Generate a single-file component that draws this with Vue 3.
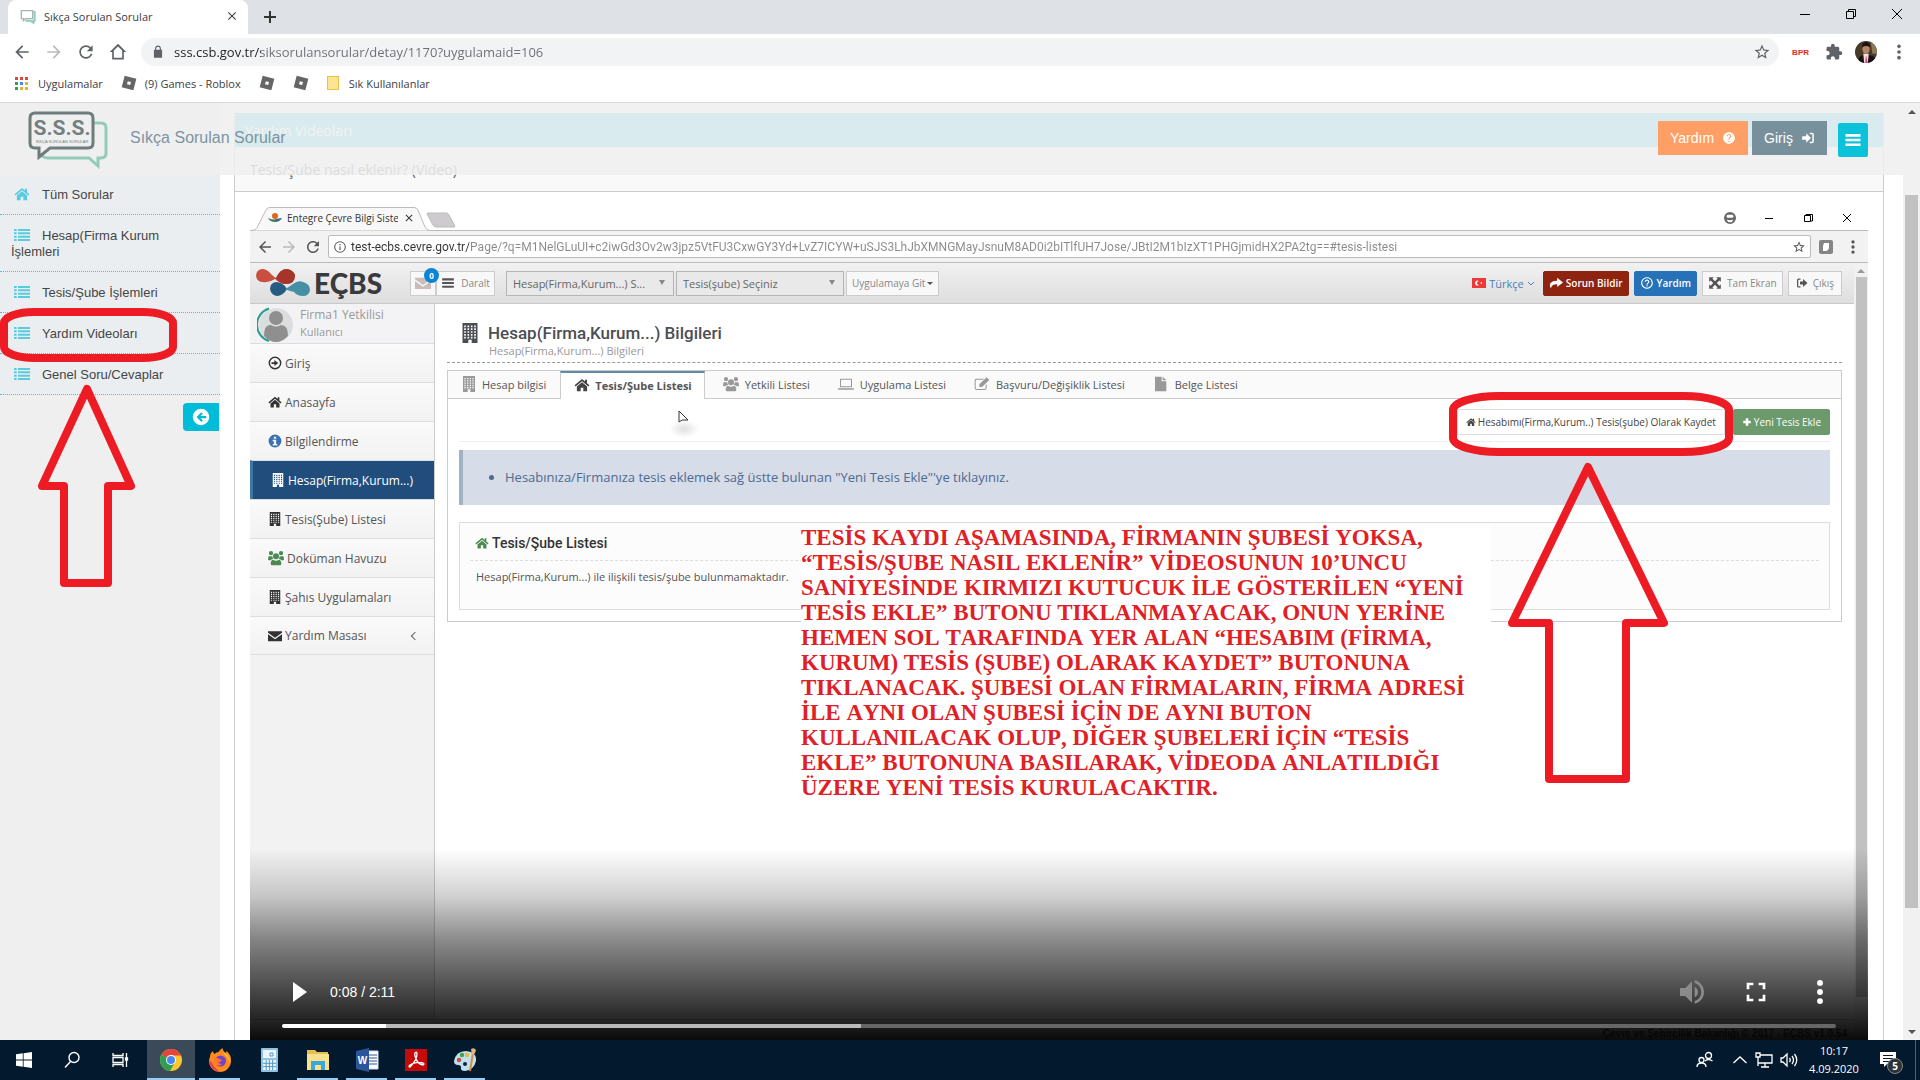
<script setup>
import { h, ref } from 'vue'

const building = (() => {
  let d = 'M3 0h18v24h-7v-4h-4v4H3z'
  for (let r = 0; r < 5; r++) for (let c = 0; c < 4; c++) d += `M${5 + c * 4} ${3 + r * 3.4}v2h2v-2z`
  return d
})()

const paths = {
  home: 'M12 3 .8 12.500l1.600 1.900L12 6.300l9.600 8.100 1.600-1.900-3.700-3.100V4h-3v2.800zM12 8 4.300 14.400V21.500h5.700v-5.500h4v5.500h5.700v-7.100z',
  list: 'M0 3h4v3H0zM6 3h18v3H6zM0 8h4v3H0zM6 8h18v3H6zM0 13h4v3H0zM6 13h18v3H6zM0 18h4v3H0zM6 18h18v3H6z',
  building,
  users: 'M12 5a4.500 4.500 0 1 1 0 9 4.500 4.500 0 0 1 0-9zM4.500 1.500a3.200 3.200 0 1 1 0 6.400 3.200 3.200 0 0 1 0-6.400zM19.500 1.500a3.200 3.200 0 1 1 0 6.400 3.200 3.200 0 0 1 0-6.400zM7.500 14.500Q12 17.500 16.500 14.500 20 15 20 20.500 20 23 17.500 23h-11Q4 23 4 20.500 4 15 7.500 14.500zM2 9q2.500 1.300 4.500 0 0 3 1.500 4.500-2.500 0-4 1.800H1.500Q0 15.300 0 13.500 0 9.500 2 9zM22 9q-2.500 1.300-4.500 0 0 3-1.500 4.500 2.500 0 4 1.800h2.500q1.500 0 1.500-1.800 0-4-2-4.500z',
  info: 'M12 1a11 11 0 1 1 0 22 11 11 0 0 1 0-22zM10 4.500v3.500h4V4.500zM8 10v2.500h2V17H8v2.500h8V17h-2v-7z',
  help: 'M12 2C6.48 2 2 6.48 2 12s4.48 10 10 10 10-4.480 10-10S17.520 2 12 2zm1 17h-2v-2h2v2zm2.070-7.750l-.9.920C13.450 12.900 13 13.500 13 15h-2v-.5c0-1.100.45-2.100 1.170-2.830l1.240-1.260c.37-.36.59-.86.59-1.410 0-1.100-.9-2-2-2s-2 .9-2 2H8c0-2.210 1.790-4 4-4s4 1.790 4 4c0 .88-.36 1.680-.93 2.250z',
  helpRing: 'M11 18h2v-2h-2v2zm1-16C6.480 2 2 6.480 2 12s4.480 10 10 10 10-4.480 10-10S17.520 2 12 2zm0 18c-4.410 0-8-3.590-8-8s3.590-8 8-8 8 3.590 8 8-3.590 8-8 8zm0-14c-2.210 0-4 1.790-4 4h2c0-1.100.9-2 2-2s2 .9 2 2c0 2-3 1.750-3 5h2c0-2.250 3-2.500 3-5 0-2.210-1.790-4-4-4z',
  infoRing: 'M11 17h2v-6h-2zm0-8h2V7h-2zm1-7a10 10 0 1 0 0 20 10 10 0 0 0 0-20zm0 18.200a8.200 8.200 0 1 1 0-16.400 8.200 8.200 0 0 1 0 16.400z',
  refresh: 'M17.650 6.350C16.200 4.900 14.210 4 12 4c-4.420 0-7.990 3.580-7.990 8s3.570 8 7.990 8c3.730 0 6.840-2.550 7.730-6h-2.080c-.82 2.330-3.040 4-5.650 4-3.310 0-6-2.690-6-6s2.690-6 6-6c1.660 0 3.140.69 4.220 1.780L13 11h7V4l-2.350 2.350z',
  back: 'M20 11H7.830l5.590-5.590L12 4l-8 8 8 8 1.410-1.410L7.830 13H20v-2z',
  fwd: 'M12 4l-1.410 1.410L16.170 11H4v2h12.170l-5.580 5.590L12 20l8-8z',
  house: 'M12 2.200 2 12h3v9h14v-9h3zM7 19v-8.700l5-4.900 5 4.900V19z',
  lock: 'M18 8h-1V6c0-2.760-2.240-5-5-5S7 3.240 7 6v2H5v14h14V8zm-9-2c0-1.660 1.340-3 3-3s3 1.340 3 3v2H9V6z',
  star: 'M22 9.240l-7.190-.62L12 2 9.190 8.630 2 9.240l5.460 4.730L5.820 21 12 17.270 18.180 21l-1.630-7.030L22 9.240zM12 15.400l-3.760 2.270 1-4.280-3.320-2.880 4.380-.38L12 6.100l1.710 4.040 4.380.38-3.320 2.880 1 4.280L12 15.400z',
  puzzle: 'M20.500 11H19V7c0-1.100-.9-2-2-2h-4V3.500C13 2.120 11.880 1 10.500 1S8 2.120 8 3.500V5H4c-1.100 0-1.990.9-1.990 2v3.800H3.500c1.490 0 2.700 1.210 2.700 2.700s-1.210 2.700-2.700 2.700H2V20c0 1.100.9 2 2 2h3.800v-1.500c0-1.490 1.210-2.700 2.700-2.700 1.490 0 2.700 1.210 2.700 2.700V22H17c1.100 0 2-.9 2-2v-4h1.500c1.380 0 2.500-1.120 2.500-2.500S21.880 11 20.500 11z',
  dots: 'M12 3a2.200 2.200 0 1 1 0 4.400A2.200 2.200 0 0 1 12 3zm0 6.800a2.200 2.200 0 1 1 0 4.400 2.200 2.200 0 0 1 0-4.400zm0 6.800a2.200 2.200 0 1 1 0 4.400 2.200 2.200 0 0 1 0-4.400z',
  volume: 'M3 9v6h4l5 5V4L7 9H3zm13.500 3c0-1.770-1.020-3.290-2.500-4.030v8.050c1.480-.73 2.500-2.250 2.500-4.020zM14 3.230v2.060c2.890.86 5 3.540 5 6.710s-2.110 5.850-5 6.710v2.060c4.010-.91 7-4.490 7-8.770s-2.990-7.860-7-8.770z',
  full: 'M7 14H5v5h5v-2H7v-3zm-2-4h2V7h3V5H5v5zm12 7h-3v2h5v-5h-2v3zM14 5v2h3v3h2V5h-5z',
  play: 'M5 2v20l14-10z',
  close: 'M19 6.400 17.600 5 12 10.600 6.400 5 5 6.400 10.600 12 5 17.600 6.400 19 12 13.400 17.600 19 19 17.600 13.400 12z',
  plus: 'M9 3h6v6h6v6h-6v6H9v-6H3V9h6z',
  login: 'M2 9h7V4l8 8-8 8v-5H2zM15 3h4q3 0 3 3v12q0 3-3 3h-4v-2.500h3.500q1 0 1-1v-11q0-1-1-1H15z',
  logout: 'M9 3H5Q2 3 2 6v12q0 3 3 3h4v-2.500H5.500q-1 0-1-1v-11q0-1 1-1H9zM8 9h6V4l9 8-9 8v-5H8z',
  share: 'M14 3l10 8-10 8v-5C8 14 4.500 15.500 3.500 21 0 16 0 8 14 8z',
  expand: 'M2 2h8L7.500 4.500 12 9l4.500-4.500L14 2h8v8l-2.500-2.500L15 12l4.500 4.500L22 14v8h-8l2.500-2.500L12 15l-4.500 4.500L10 22H2v-8l2.500 2.500L9 12 4.500 7.500 2 10z',
  bars: 'M2 4h20v3.500H2zM2 10.300h20v3.500H2zM2 16.600h20v3.500H2z',
  mail: 'M0 4h24v2.500L12 15 0 6.500zM0 9l12 8.500L24 9v12H0z',
  enter: 'M12 1a11 11 0 1 0 0 22 11 11 0 0 0 0-22zm0 19.500a8.500 8.500 0 1 1 0-17 8.500 8.500 0 0 1 0 17zM6 10.500v3h5V17l6.500-5L11 7v3.500z',
  leftCircle: 'M12 1a11 11 0 1 0 0 22 11 11 0 0 0 0-22zM12.500 5.500l2 2-3 3H19v3h-7.500l3 3-2 2L6 12z',
  laptop: 'M4 4h16q1 0 1 1v11q0 1-1 1H4q-1 0-1-1V5q0-1 1-1zM4.500 5.500v10h15v-10zM0 18.500h24v1q0 1-2 1H2q-2 0-2-1z',
  edit: 'M3 4h12l-1.500 1.500H4q-1.500 0-1.500 1.500v11q0 1.500 1.500 1.500h12q1.500 0 1.500-1.500v-4L19 12.500V18q0 3-3 3H4q-3 0-3-3V7q0-3 2-3zM8 12.500 19 2l4 4-11 10.500H8z',
  file: 'M3 1h10v7h7v15H3zM14.500 1l5.500 5.500h-5.500z',
  face: 'M12 0a12 12 0 1 0 0 24 12 12 0 0 0 0-24zM8 5.500h8a3 3 0 0 1 0 6H8a3 3 0 0 1 0-6zM5 15q7 3 14 0-2 5.500-7 5.500T5 15z',
  roblox: 'M5.500 1 23 5.500 18.500 23 1 18.500zM10.200 9.200 9 13.800l4.800 1.200L15 10.400z'
}
const Icon = (p) => h('svg', { viewBox: '0 0 24 24', fill: 'currentColor', 'aria-hidden': 'true' }, [h('path', { d: paths[p.n], 'fill-rule': 'evenodd' })])
Icon.props = ['n']

const url = ref('sss.csb.gov.tr/siksorulansorular/detay/1170?uygulamaid=106')
const innerUrl = ref('test-ecbs.cevre.gov.tr/Page/?q=M1NelGLuUI+c2iwGd3Ov2w3jpz5VtFU3CxwGY3Yd+LvZ7ICYW+uSJS3LhJbXMNGMayJsnuM8AD0i2bITlfUH7Jose/JBtI2M1bIzXT1PHGjmidHX2PA2tg==#tesis-listesi')
const colors = ['#d94b3d', '#d94b3d', '#d94b3d', '#2f9e63', '#4285f4', '#e8b12c', '#2f9e63', '#e8b12c', '#e8b12c']

const menu = [
  { t: 'Tüm Sorular', i: 'home' },
  { t: 'Hesap(Firma Kurum İşlemleri', i: 'list' },
  { t: 'Tesis/Şube İşlemleri', i: 'list' },
  { t: 'Yardım Videoları', i: 'list' },
  { t: 'Genel Soru/Cevaplar', i: 'list' }
]
const side = [
  { t: 'Giriş', i: 'enter' },
  { t: 'Anasayfa', i: 'home' },
  { t: 'Bilgilendirme', i: 'info', k: 'blue' },
  { t: 'Hesap(Firma,Kurum...)', i: 'building', k: 'active' },
  { t: 'Tesis(Şube) Listesi', i: 'building' },
  { t: 'Doküman Havuzu', i: 'users', k: 'green' },
  { t: 'Şahıs Uygulamaları', i: 'building' },
  { t: 'Yardım Masası', i: 'mail', sub: true }
]
const tabs = [
  { t: 'Hesap bilgisi', i: 'building' },
  { t: 'Tesis/Şube Listesi', i: 'home', on: true },
  { t: 'Yetkili Listesi', i: 'users' },
  { t: 'Uygulama Listesi', i: 'laptop' },
  { t: 'Başvuru/Değişiklik Listesi', i: 'edit' },
  { t: 'Belge Listesi', i: 'file' }
]
const note = [
  'TESİS KAYDI AŞAMASINDA, FİRMANIN ŞUBESİ YOKSA,',
  '“TESİS/ŞUBE NASIL EKLENİR” VİDEOSUNUN 10’UNCU',
  'SANİYESİNDE KIRMIZI KUTUCUK İLE GÖSTERİLEN “YENİ',
  'TESİS EKLE” BUTONU TIKLANMAYACAK, ONUN YERİNE',
  'HEMEN SOL TARAFINDA YER ALAN “HESABIM (FİRMA,',
  'KURUM) TESİS (ŞUBE) OLARAK KAYDET” BUTONUNA',
  'TIKLANACAK. ŞUBESİ OLAN FİRMALARIN, FİRMA ADRESİ',
  'İLE AYNI OLAN ŞUBESİ İÇİN DE AYNI BUTON',
  'KULLANILACAK OLUP, DİĞER ŞUBELERİ İÇİN “TESİS',
  'EKLE” BUTONUNA BASILARAK, VİDEODA ANLATILDIĞI',
  'ÜZERE YENİ TESİS KURULACAKTIR.'
]
</script>

<template>
  <div class="screen">
    <!-- browser frame -->
    <header class="tabstrip">
      <div class="tab">
        <svg class="i16" viewBox="0 0 24 24" fill="none" stroke-width="2"><path d="M20 6h2v13h-2v3l-4-3H8" stroke="#8fcdb9" stroke-width="3" /><path d="M2 4h17v12H8l-3 3v-3H2z" fill="#fff" stroke="#a9b3b3" /></svg>
        <span class="tab-title">Sıkça Sorulan Sorular</span>
        <button class="bare" aria-label="Sekmeyi kapat"><Icon n="close" class="i14" /></button>
      </div>
      <button class="bare newtab" aria-label="Yeni sekme"><svg class="i14" viewBox="0 0 14 14" stroke="#333" stroke-width="2"><path d="M7 1v12M1 7h12" /></svg></button>
      <div class="win">
        <button class="bare" aria-label="Küçült"><svg class="i12" viewBox="0 0 12 12" stroke="#000"><path d="M1 6.500h10" /></svg></button>
        <button class="bare" aria-label="Önceki boyut"><svg class="i12" viewBox="0 0 12 12" fill="none" stroke="#000"><path d="M1.500 3.500h7v7h-7zM3.500 3.500v-2h7v7h-2" /></svg></button>
        <button class="bare" aria-label="Kapat"><svg class="i12" viewBox="0 0 12 12" stroke="#000"><path d="M1 1l10 10M11 1 1 11" /></svg></button>
      </div>
    </header>
    <div class="toolbar">
      <button class="bare" aria-label="Geri"><Icon n="back" class="i20" /></button>
      <button class="bare pale" aria-label="İleri"><Icon n="fwd" class="i20" /></button>
      <button class="bare" aria-label="Yenile"><Icon n="refresh" class="i20" /></button>
      <button class="bare" aria-label="Ana sayfa"><Icon n="house" class="i20" /></button>
      <div class="omni">
        <Icon n="lock" class="i14" />
        <input v-model="url" class="url" aria-label="Adres çubuğu" />
        <Icon n="star" class="i18" />
      </div>
      <span class="bpr">BPR</span>
      <Icon n="puzzle" class="i18" />
      <svg class="avatar" viewBox="0 0 24 24"><defs><clipPath id="av"><circle cx="12" cy="12" r="12" /></clipPath></defs><g clip-path="url(#av)"><path fill="#4a3a28" d="M0 0h24v24H0z" /><path fill="#8a7a58" d="M17 0h7v14h-5z" /><path fill="#171215" d="M3 24q0-9 9-9t12 7v2z" /><ellipse cx="12" cy="8.500" rx="4" ry="5.500" fill="#b98568" /><path d="M7.500 7q0-6 4.500-6t4.500 6q-4-3-9 0z" fill="#191411" /><path d="M9 14h6l-1 10h-4z" fill="#f3dfe4" /><path d="M12 15l2 9h-3z" fill="#e2487c" /></g></svg>
      <Icon n="dots" class="i20" />
    </div>
    <nav class="bookmarks" aria-label="Yer işaretleri">
      <a href="#"><span class="apps"><i v-for="(c, k) in colors" :key="k" :style="{ background: c }"></i></span>Uygulamalar</a>
      <a href="#"><Icon n="roblox" class="i18" />(9) Games - Roblox</a>
      <a href="#" aria-label="Roblox"><Icon n="roblox" class="i18" /></a>
      <a href="#" aria-label="Roblox"><Icon n="roblox" class="i18" /></a>
      <a href="#"><span class="folder"></span>Sık Kullanılanlar</a>
    </nav>

    <!-- page -->
    <div class="page">
      <div class="masthead">
        <svg class="logo" viewBox="0 0 82 60" fill="none"><path d="M66 13h7q5 0 5 5v25q0 5-5 5h-3v8L61 48H20q-4 0-6-2" stroke="#93cbb9" stroke-width="3" /><path d="M7 3h53q5 0 5 5v25q0 5-5 5H22L11 47v-9H7q-5 0-5-5V8q0-5 5-5z" stroke="#6f7c7c" stroke-width="3" /><text x="34" y="25" text-anchor="middle" class="logo-big">S.S.S.</text><text x="34" y="33" text-anchor="middle" class="logo-small">SIKÇA SORULAN SORULAR</text></svg>
        <span class="brand">Sıkça Sorulan Sorular</span>
        <button class="btn orange">Yardım <Icon n="help" class="i14" /></button>
        <button class="btn slate">Giriş <Icon n="login" class="i14" /></button>
        <button class="btn cyan" aria-label="Menü"><Icon n="bars" class="i18" /></button>
      </div>
      <aside class="left">
        <ul>
          <li v-for="m in menu" :key="m.t"><a href="#"><Icon :n="m.i" class="mi" />{{ m.t }}</a></li>
        </ul>
        <button class="collapse" aria-label="Menüyü daralt"><Icon n="leftCircle" class="i18" /></button>
      </aside>
      <main class="panel">
        <h2>Yardım Videoları</h2>
        <h3>Tesis/Şube nasıl eklenir? (Video)</h3>
        <section class="video">
          <div class="v-tabs">
            <svg class="v-tab-bg" viewBox="0 0 210 25" fill="none"><path d="M0 24.500q5 0 6-3L15 4q1-2.500 4-2.500h144q3 0 4 2.500l7 17q1 3 5 3.500" fill="#f8f8f8" stroke="#bbb" /><path d="M176 8q0-1 1-1h18q2 0 3 2l6 11q0 1-1 1h-18q-2 0-3-2z" fill="#cdcbce" stroke="#bbb" /></svg>
            <div class="v-tab"><svg class="i14" viewBox="0 0 14 14"><circle cx="7" cy="5" r="3" fill="#e0661f" /><path d="M0 7q7 3 14 0-2 4-7 4T0 7z" fill="#3d7f57" /><path d="M7 8l7-1-6 4z" fill="#4565a0" /></svg><span>Entegre Çevre Bilgi Siste</span><Icon n="close" class="i12" /></div>
            <div class="v-win"><Icon n="face" class="i12" /><svg class="i12" viewBox="0 0 12 12" stroke="#000"><path d="M2 6.500h8" /></svg><svg class="i12" viewBox="0 0 12 12" fill="none" stroke="#000"><path d="M2.500 3.500h6v6h-6zM4 3.500v-1h6.500V9H9" /></svg><svg class="i12" viewBox="0 0 12 12" stroke="#000"><path d="M2 2l8 8M10 2l-8 8" /></svg></div>
          </div>
          <div class="v-bar">
            <Icon n="back" class="i18" /><Icon n="fwd" class="i18 pale" /><Icon n="refresh" class="i18" />
            <div class="v-omni"><Icon n="infoRing" class="i14" /><input v-model="innerUrl" class="v-url" aria-label="Video adres çubuğu" /><Icon n="star" class="i14" /></div>
            <svg class="i14 ext" viewBox="0 0 14 14"><rect width="14" height="14" rx="2" fill="#858585" /><path d="M5 3h5v4q0 3-3 4H4V6z" fill="#fff" /></svg><Icon n="dots" class="i18" />
          </div>
          <div class="v-page">
            <div class="app">
              <div class="app-head">
                <svg class="ecbs" viewBox="0 0 54 28"><path d="M0 7q0-6 6-7 5 0 9 5 3 3 5 4 4-9 11-9 6 1 8 6 0 9-9 9-6 0-11-5-6 4-12 3Q1 13 0 7z" fill="#c9503f" /><path d="M20 9q4-9 11-9 6 1 8 6 0 9-9 9-6 0-10-6z" fill="#a5352a" /><path d="M14 20q0-6 6-7 7 0 11 7-4 7-10 7-6-1-7-7z" fill="#275c82" /><path d="M29 20q4-2 8-5 5-4 10-2 7 2 7 8-1 6-7 6-6 0-9-4-5-1-9-3z" fill="#4690a5" /></svg>
                <span class="ecbs-name">EÇBS</span>
                <button class="wbtn mailb" aria-label="Mesajlar"><Icon n="mail" class="i16" /><b>0</b></button>
                <button class="wbtn daralt"><Icon n="bars" class="i14" />Daralt</button>
                <select class="sel first" aria-label="Hesap seçimi"><option>Hesap(Firma,Kurum...) S...</option></select>
                <select class="sel" aria-label="Tesis seçimi"><option>Tesis(şube) Seçiniz</option></select>
                <button class="wbtn git">Uygulamaya Git<i class="caret"></i></button>
                <div class="head-right">
                  <a href="#" class="lang"><svg class="flag" viewBox="0 0 14 10"><path d="M0 0h14v10H0z" fill="#ee3a36" /><path d="M7 3a2.500 2.500 0 1 0 0 4 2 2 0 1 1 0-4zM8 5l2-1v2z" fill="#fff" /></svg>Türkçe<svg class="i8" viewBox="0 0 8 8" fill="none" stroke="#4a7fb5"><path d="M1 3l3 3 3-3" /></svg></a>
                  <button class="wbtn red"><Icon n="share" class="i14" />Sorun Bildir</button>
                  <button class="wbtn blueb"><Icon n="helpRing" class="i14" />Yardım</button>
                  <button class="wbtn"><Icon n="expand" class="i14" />Tam Ekran</button>
                  <button class="wbtn exit"><Icon n="logout" class="i12" />Çıkış</button>
                </div>
              </div>
              <div class="app-body">
                <aside class="nav">
                  <div class="user">
                    <svg class="face" viewBox="0 0 36 36"><circle cx="19" cy="18" r="17" fill="#dcdddf" /><path d="M12 1.500A17 17 0 0 0 12 34" fill="none" stroke="#2a9d8f" stroke-width="2" /><circle cx="19" cy="11" r="7" fill="#8f8f8f" /><path d="M7 29q0-12 7-11 5 3 10 0 7 0 7 11-6 6-12 6T7 29z" fill="#8f8f8f" /></svg>
                    <div><p>Firma1 Yetkilisi</p><small>Kullanıcı</small></div>
                  </div>
                  <a v-for="s in side" :key="s.t" href="#" class="nav-item" :class="s.k"><Icon :n="s.i" class="i14" />{{ s.t }}<span v-if="s.sub" class="chev"></span></a>
                </aside>
                <div class="content">
                  <div class="title"><Icon n="building" class="i20" /><div><h1>Hesap(Firma,Kurum...) Bilgileri</h1><p>Hesap(Firma,Kurum...) Bilgileri</p></div></div>
                  <div class="box">
                    <div class="tabs"><button v-for="t in tabs" :key="t.t" :class="{ on: t.on }"><Icon :n="t.i" class="i16" />{{ t.t }}</button></div>
                    <div class="inside">
                      <div class="actions">
                        <button class="save"><Icon n="home" class="i10" />Hesabımı(Firma,Kurum..) Tesis(şube) Olarak Kaydet</button>
                        <button class="add"><Icon n="plus" class="i10" />Yeni Tesis Ekle</button>
                      </div>
                      <ul class="alert"><li>Hesabınıza/Firmanıza tesis eklemek sağ üstte bulunan "Yeni Tesis Ekle"'ye tıklayınız.</li></ul>
                      <div class="well">
                        <h4><Icon n="home" class="i14" />Tesis/Şube Listesi</h4>
                        <p>Hesap(Firma,Kurum...) ile ilişkili tesis/şube bulunmamaktadır.</p>
                      </div>
                    </div>
                  </div>
                </div>
              </div>
              <footer class="foot">Çevre ve Şehircilik Bakanlığı © 2017 - EÇBS v1.0.54</footer>
            </div>
            <div class="v-scroll"><i></i><div></div></div>
          </div>
          <svg class="cursor" viewBox="0 0 34 30"><defs><radialGradient id="shade"><stop offset="0" stop-opacity="0.120" /><stop offset="1" stop-opacity="0" /></radialGradient></defs><ellipse cx="17" cy="20" rx="15" ry="9" fill="url(#shade)" /><path d="M12 2v11l3-2h6z" fill="#fff" stroke="#333" /></svg>
          <p class="note"><template v-for="n in note" :key="n">{{ n }}<br /></template></p>
          <div class="controls">
            <div class="ctl-row">
              <button class="bare" aria-label="Oynat"><Icon n="play" class="i24" /></button>
              <span>0:08 / 2:11</span>
              <button class="bare mute" aria-label="Ses"><Icon n="volume" class="i32" /></button>
              <button class="bare" aria-label="Tam ekran"><Icon n="full" class="i32" /></button>
              <button class="bare" aria-label="Diğer seçenekler"><Icon n="dots" class="i32" /></button>
            </div>
            <input class="seek" type="range" min="0" max="131" value="8" aria-label="Video konumu" />
          </div>
        </section>
      </main>
      <div class="scroll"><i></i><div></div><i class="down"></i></div>
    </div>

    <!-- taskbar -->
    <footer class="taskbar">
      <button class="task sys" aria-label="Başlat"><svg viewBox="0 0 16 16" class="i16" fill="#fff"><path d="M0 2.300 6.800 1.300v6.300H0zM7.600 1.200 16 0v7.600H7.600zM0 8.400h6.800v6.300L0 13.700zM7.600 8.400H16V16l-8.400-1.200z" /></svg></button>
      <button class="task sys" aria-label="Ara"><svg viewBox="0 0 18 18" class="i18" fill="none" stroke="#fff" stroke-width="1.400"><circle cx="11" cy="6.500" r="5" /><path d="M7.500 10.500 2 16.500" /></svg></button>
      <button class="task sys" aria-label="Görev görünümü"><svg viewBox="0 0 18 18" class="i18" fill="none" stroke="#fff" stroke-width="1.300"><path d="M2 2v2.500h10V2M2 16v-2.500h10V16M2 6.500h10v5H2zM15.500 2v14M14.500 7h2v2h-2z" /></svg></button>
      <button class="task run on" aria-label="Chrome"><svg viewBox="0 0 24 24" class="i24"><circle cx="12" cy="12" r="11" fill="#fbc72c" /><path d="M12 12 2.500 6.500A11 11 0 0 1 21.500 6.500L22 7.500H12z" fill="#e2453c" /><path d="M2.500 6.500A11 11 0 0 0 11 23l5-8.700-4-2.300z" fill="#2f9e55" /><circle cx="12" cy="12" r="5" fill="#fff" /><circle cx="12" cy="12" r="4" fill="#4a86ee" /></svg></button>
      <button class="task run" aria-label="Firefox"><svg viewBox="0 0 24 24" class="i24"><path d="M2 9Q2 5 5 3q0 2 1.500 3 2-2 4-2 1-2 4-4 0 3 3 5 1-1 1-2 5 4 4.500 10A11 11 0 0 1 12 24 11 11 0 0 1 1 13q0-2 1-4z" fill="#ff8a1e" /><path d="M15 0q0 4 3 6 5 4 3 10-2 6-9 7Q24 20 20 10q-5-4-5-10z" fill="#ffd43a" /><path d="M1 13q2 10 12 11-6-3-8-7T1 13z" fill="#f0315a" /><circle cx="12.500" cy="13" r="5.500" fill="#7542c8" /><path d="M6 10q3-1 5 1l3 1q-1 2-4 2 1 2 4 2-4 3-7 0-2-3-1-6z" fill="#ff7a20" /></svg></button>
      <button class="task" aria-label="Hesap makinesi"><svg viewBox="0 0 24 24" class="i24"><rect x="4" y="0" width="17" height="24" rx="1" fill="#8fc3e6" /><rect x="6" y="2" width="13" height="8" fill="#eef4f5" /><path d="M6 12h13v10H6z" fill="#e9f4fb" /><path d="M9.200 12v10M12.400 12v10M15.600 12v10M6 15.300h13M6 18.600h13" stroke="#5899c6" /><path d="M13 5h3v3h-3z" fill="none" stroke="#5899c6" /></svg></button>
      <button class="task run" aria-label="Dosya Gezgini"><svg viewBox="0 0 24 24" class="i24"><path d="M1 2h8l2 2h11v17H1z" fill="#e9bd55" /><path d="M1 6h22v16H1z" fill="#fbe08d" /><path d="M5 22v-9h14v9h-4v-5H9v5z" fill="#3ba7dd" /></svg></button>
      <button class="task run" aria-label="Word"><svg viewBox="0 0 24 24" class="i24"><path d="M12 3h11v18H12z" fill="#fff" stroke="#cfdcf0" /><path d="M14 7h8M14 10h8M14 13h8M14 16h8" stroke="#2b579a" /><path d="M1 3l13-3v24L1 21z" fill="#2b579a" /><text x="7.500" y="16" text-anchor="middle" class="word-w">W</text></svg></button>
      <button class="task run" aria-label="Acrobat"><svg viewBox="0 0 24 24" class="i24"><path d="M1 1h22v22H1z" fill="#c30b0b" /><path d="M11 5q2-2 2 1 0 6-7 13-2 0 0-2 5-4 13-2 2 1 0 2-6-1-8-9-.5-2 0-3z" fill="none" stroke="#fff" stroke-width="1.300" /></svg></button>
      <button class="task run" aria-label="Paint"><svg viewBox="0 0 24 24" class="i24"><path d="M13 3Q24 4 23 13q-2 9-11 10-5 0-4-4 0-2-3-2-4 0-4-4Q3 3 13 3z" fill="#bfe0ee" /><circle cx="6" cy="12" r="2.200" fill="#d9473e" /><circle cx="9" cy="7" r="2.200" fill="#47a04c" /><circle cx="14" cy="7" r="2.200" fill="#efb83c" /><circle cx="12" cy="16" r="2" fill="#12233a" /><path d="M20 5 17 23" stroke="#d98d3b" stroke-width="2" /><path d="M18 1q3-2 5 1-1 5-4 5z" fill="#e6b27f" /></svg></button>
      <div class="tray">
        <svg viewBox="0 0 18 18" class="i18" fill="none" stroke="#fff" stroke-width="1.300"><circle cx="12.500" cy="4.500" r="3" /><circle cx="5.500" cy="9" r="2.500" /><path d="M1 16q0-4 4.500-4t4.500 4M9 10q3-3 7.500 0" /></svg>
        <svg viewBox="0 0 16 16" class="i16 up" fill="none" stroke="#fff" stroke-width="1.300"><path d="M1.500 11 8 5l6.500 6" /></svg>
        <svg viewBox="0 0 18 18" class="i18" fill="none" stroke="#fff" stroke-width="1.300"><path d="M5 4h12v8H3V8M10 12v4M6 16h8M1 2h4v4H1zM3 6v9" /></svg>
        <svg viewBox="0 0 18 18" class="i18" fill="none" stroke="#fff" stroke-width="1.300"><path d="M1 7h2l4-4v12l-4-4H1zM9.500 7q1.500 2 0 4M12 5q3 4 0 8M14.500 3q4.500 6 0 12" /></svg>
        <div class="clock"><span>10:17</span><span>4.09.2020</span></div>
        <div class="notif"><svg viewBox="0 0 18 18" class="i18"><path d="M1 1h16v12H8l-3 3v-3H1z" fill="#fff" /><path d="M4 4.500h10M4 7.500h10M4 10.500h7" stroke="#03192d" /></svg><b>5</b></div>
        <i class="edge"></i>
      </div>
    </footer>

    <!-- red markings -->
    <svg class="mark mark-left" viewBox="0 0 240 600"><rect x="4" y="312" width="169" height="46" rx="30" ry="11" /><path d="M87 389 131 486H108V583H64V486H42z" /></svg>
    <svg class="mark mark-right" viewBox="0 0 480 800"><rect x="13" y="396" width="276" height="56" rx="46" ry="14" /><path d="M148 467 224 623H186V779H109V623H72z" /></svg>
  </div>
</template>

<style>
body { margin: 0; overflow: hidden; }
</style>

<style scoped>
* { box-sizing: border-box; }
h1, h2, h3, h4, p, ul { margin: 0; padding: 0; font-weight: 400; }
a { color: inherit; text-decoration: none; }
button, input, select { font: inherit; color: inherit; }
svg { flex: none; }
.screen { position: relative; display: flex; flex-direction: column; height: 100vh; overflow: hidden; font-family: "Open Sans", "Noto Sans", sans-serif; font-size: 12px; color: #3c4043; background: #fff; }
.bare { display: flex; border: 0; padding: 0; background: none; }
.pale { color: #b9bbbe; }
.i8 { width: 8px; height: 8px; }
.i10 { width: 10px; height: 10px; }
.i12 { width: 12px; height: 12px; }
.i14 { width: 14px; height: 14px; }
.i16 { width: 16px; height: 16px; }
.i18 { width: 18px; height: 18px; }
.i20 { width: 20px; height: 20px; }
.i24 { width: 24px; height: 24px; }
.i32 { width: 32px; height: 32px; }

.tabstrip { display: flex; height: 34px; flex: none; background: #dee1e6; padding-left: 8px; }
.tab { display: flex; align-items: center; gap: 8px; width: 240px; padding: 0 9px 2px 12px; background: #fff; border-radius: 8px 8px 0 0; font-size: 11px; }
.tab-title { flex: 1; }
.newtab { align-items: center; margin-left: 15px; }
.win { display: flex; gap: 34px; margin-left: auto; padding: 8px 17px 0 0; }
.toolbar { display: flex; align-items: center; gap: 12px; height: 36px; flex: none; padding: 0 11px 0 12px; color: #5f6368; }
.omni { flex: 1; display: flex; align-items: center; gap: 9px; height: 28px; margin-left: 1px; padding: 0 8px 0 10px; border-radius: 14px; background: #f1f3f4; }
.url { flex: 1; border: 0; outline: 0; padding: 0; font-size: 13px; color: #5f6368; background: linear-gradient(90deg, #202124 87px, #6b6f74 87px); -webkit-background-clip: text; background-clip: text; -webkit-text-fill-color: transparent; }
.bpr { margin: 0 4px 0 1px; font: 700 8px "Liberation Sans", sans-serif; color: #ea2a1c; }
.avatar { width: 22px; height: 22px; }
.bookmarks { display: flex; align-items: center; gap: 18px; height: 33px; flex: none; padding: 0 15px 6px; border-bottom: 1px solid #d8dadd; font-size: 11px; }
.bookmarks a { display: flex; align-items: center; gap: 8px; }
.bookmarks svg { color: #666; width: 16px; height: 16px; }
.apps { display: grid; grid-template-columns: repeat(3, 3px); gap: 2px; margin-right: 2px; }
.apps i { height: 3px; }
.folder { width: 12px; height: 14px; background: #fde392; border: 1px solid #e6c34d; margin-right: 2px; }

.page { position: relative; flex: 1; min-height: 0; display: flex; background: #fff; }
.masthead { position: absolute; inset: 0 17px auto 0; z-index: 2; display: flex; align-items: flex-start; height: 72px; padding: 7px 35px 0 28px; background: rgba(239, 239, 239, 0.88); font-family: "Liberation Sans", Arial, sans-serif; }
.logo { width: 82px; height: 60px; }
.logo-big { font: 700 21px "Roboto", sans-serif; fill: #737f7f; }
.logo-small { font: 400 4px "Liberation Sans", sans-serif; fill: #737f7f; }
.brand { margin: 18px auto 0 20px; font-size: 16px; line-height: 20px; color: #7d94a3; }
.btn { display: flex; align-items: center; justify-content: center; gap: 8px; border: 0; height: 34px; margin-top: 11px; color: #fff; font-size: 14px; }
.orange { width: 90px; background: #ff9f66; }
.slate { width: 75px; margin-left: 4px; background: #78909c; }
.cyan { width: 30px; height: 34px; margin: 13px 0 0 11px; padding: 0; border-radius: 2px; background: #0cc2db; }
.left { flex: none; width: 220px; padding-top: 71px; background: #efefef; font: 13px/16px "Liberation Sans", Arial, sans-serif; color: #454545; }
.left ul { list-style: none; background: #eaeef1; }
.left li { padding: 12px 40px 11px 11px; border-bottom: 1px dotted #4dbfe0; }
.mi { width: 18px; height: 16px; margin: 0 11px 0 2px; vertical-align: -3px; color: #59cbdf; }
.collapse { display: flex; align-items: center; justify-content: center; width: 36px; height: 28px; margin: 8px 1px 0 auto; border: 0; border-radius: 4px 0 0 4px; color: #fff; background: #00bcd8; }
.panel { flex: 1; min-width: 0; display: flex; flex-direction: column; margin: 10px 19px 0 14px; border: solid #ccc; border-width: 0 1px; }
.panel h2 { height: 34px; padding: 7px 10px; font-size: 14px; line-height: 22px; color: #fff; background: #3cc8e4; }
.panel h3 { height: 45px; padding: 12px 15px; border-bottom: 1px solid #ccc; background: #f9f9f9; font-size: 14px; line-height: 22px; color: #555; }
.scroll, .v-scroll { display: flex; flex-direction: column; align-items: center; background: #f1f1f1; }
.scroll { width: 17px; padding: 7px 0 6px; }
.scroll div { width: 13px; flex: 1; margin: 81px 0 122px; background: #c1c1c1; }
.scroll i, .v-scroll i { border: 4px solid transparent; border-top: 0; border-bottom-color: #555; }
.scroll .down { transform: rotate(180deg); }

.video { position: relative; flex: 1; min-height: 0; display: flex; flex-direction: column; margin: 14px 15px 0; overflow: hidden; background: #fff; }
.v-tabs { position: relative; display: flex; align-items: center; height: 25px; flex: none; border-bottom: 1px solid #bbb; }
.v-tab-bg { position: absolute; left: 1px; bottom: -1px; width: 210px; height: 25px; }
.v-tab { position: relative; display: flex; align-items: center; gap: 5px; padding-left: 18px; font-size: 10px; color: #333; }
.v-tab span { width: 111px; white-space: nowrap; overflow: hidden; }
.v-win { display: flex; gap: 27px; margin-left: auto; padding-right: 15px; color: #666; }
.v-bar { display: flex; align-items: center; gap: 6px; height: 32px; flex: none; padding: 0 6px; background: #f2f2f2; border-bottom: 1px solid #bbb; color: #555; }
.v-omni { flex: 1; display: flex; align-items: center; gap: 4px; height: 23px; margin: 0 2px 0 0; padding: 0 4px; border: 1px solid #bbb; border-radius: 2px; background: #fff; }
.v-url { flex: 1; padding: 0; border: 0; outline: 0; font-family: "Roboto", sans-serif; font-size: 12px; color: #888; background: linear-gradient(90deg, #333 118px, #8a8a8a 118px); -webkit-background-clip: text; background-clip: text; -webkit-text-fill-color: transparent; }
.ext { margin-right: 5px; }
.v-page { flex: 1; min-height: 0; display: flex; }
.v-scroll { width: 14px; flex: none; padding: 6px 0 43px; }
.v-scroll i { border-bottom-color: #999; }
.v-scroll div { width: 11px; flex: 1; margin-top: 4px; background: #c1c1c1; }
.app { flex: 1; min-width: 0; display: flex; flex-direction: column; color: #555; font-size: 11px; }
.app-head { display: flex; align-items: center; height: 41px; flex: none; padding: 0 12px 0 6px; background: linear-gradient(#f1f1f2, #dedede); border-bottom: 1px solid #c8c8c8; font-size: 10px; color: #777; }
.ecbs { width: 54px; height: 28px; }
.ecbs-name { width: 100px; padding-left: 4px; font: 900 28px/28px "Lato", sans-serif; color: #3a3a3c; }
.wbtn { position: relative; display: flex; align-items: center; justify-content: center; gap: 6px; height: 25px; padding: 0 5px; border: 1px solid #ccc; background: #f8f8f8; color: #888; white-space: nowrap; }
.wbtn svg { color: #555; }
.mailb { width: 26px; padding: 0; }
.daralt { width: 59px; }
.mailb svg { color: #c9bcbc; }
.mailb b { position: absolute; z-index: 1; right: -4px; top: -4px; width: 15px; height: 15px; border-radius: 50%; background: #0a84d6; color: #fff; font: 700 8px/15px "Open Sans", sans-serif; }
.sel { appearance: none; width: 168px; height: 25px; margin-left: 2px; padding: 0 6px; border: 1px solid #b5b5b5; border-radius: 0; color: #666; font-size: 11px; background: #e9e9e9 url("data:image/svg+xml,%3Csvg xmlns='http://www.w3.org/2000/svg' width='6' height='6'%3E%3Cpath d='M0 0h6L3 5z' fill='%23888'/%3E%3C/svg%3E") no-repeat right 8px top 8px; }
.sel.first { margin-left: 11px; }
.git { margin-left: 2px; gap: 2px; }
.caret { border: 3px solid transparent; border-bottom: 0; border-top-color: #555; }
.head-right { display: flex; align-items: center; gap: 5px; margin-left: auto; }
.head-right .wbtn { gap: 5px; }
.head-right .exit { padding: 0 7px; }
.lang { display: flex; align-items: center; gap: 3px; margin-right: 3px; font-size: 11px; color: #4a7fb5; }
.flag { width: 14px; height: 10px; }
.head-right .red, .head-right .blueb { border-radius: 2px; color: #fff; font-weight: 600; gap: 3px; }
.red svg, .blueb svg { color: #fff; }
.red { background: #8e230f; border-color: #8e230f; }
.blueb { background: #2671b8; border-color: #2671b8; }
.app-body { flex: 1; min-height: 0; display: flex; }
.nav { width: 185px; flex: none; background: #f2f2f2; border-right: 1px solid #ccc; }
.user { display: flex; gap: 7px; height: 39px; padding: 3px 7px; background: #f3f3f5; line-height: 16px; font-size: 12px; color: #999; }
.user small { display: block; font-size: 11px; line-height: 18px; }
.face { width: 36px; height: 36px; }
.nav-item { display: flex; align-items: center; gap: 3px; height: 39px; padding: 0 16px 0 18px; border-top: 1px solid #ddd; background: linear-gradient(#fafafa, #f2f2f2); font-size: 12px; }
.nav-item:last-child { border-bottom: 1px solid #ddd; }
.nav-item svg { color: #333; }
.nav-item.blue svg { color: #3b72b0; }
.nav-item.green svg { color: #4c8a54; width: 16px; height: 16px; }
.nav-item.active { padding-left: 18px; border-left: 3px solid #3b78a3; background: #204d7b; color: #fff; font-weight: 500; }
.nav-item.active svg { color: #fff; }
.chev { width: 6px; height: 6px; margin-left: auto; border: solid #666; border-width: 0 0 1px 1px; transform: rotate(45deg); }
.content { flex: 1; min-width: 0; padding: 18px 12px 0; }
.title { display: flex; gap: 8px; height: 41px; padding: 1px 0 0 13px; border-bottom: 1px dashed #999; }
.title svg { color: #4b4e52; }
.title h1 { font: 500 17px/20px "Roboto", sans-serif; color: #4b4e52; }
.title p { margin-top: 1px; font-size: 11px; line-height: 14px; color: #999; padding-left: 1px; }
.box { margin-top: 7px; border: 1px solid #ccc; }
.tabs { display: flex; height: 28px; background: #fafafa; border-bottom: 1px solid #ccc; font-size: 11px; }
.tabs button { display: flex; align-items: center; gap: 6px; height: 28px; border: 0; padding: 0 10px 2px 18px; background: none; color: #555; }
.tabs button:first-child { padding: 0 14px 2px 13px; gap: 5px; }
.tabs svg { color: #999; }
.tabs .on { gap: 5px; padding: 0 12px 2px 13px; border: solid #ccc; border-width: 2px 1px 0; border-top-color: #5f8ca6; background: #fff; font-weight: 700; }
.tabs .on svg { color: #444; }
.inside { padding: 10px 11px 11px; }
.actions { display: flex; justify-content: flex-end; gap: 8px; height: 33px; border-bottom: 1px solid #eee; }
.actions button { display: flex; align-items: center; gap: 2px; height: 26px; padding: 0 8px; border: 1px solid #ddd; background: #fff; font-size: 10px; color: #444; white-space: nowrap; }
.actions .add { border-color: #6d9a6c; border-radius: 2px; background: #6d9a6c; color: #fff; }
.alert { height: 55px; margin-top: 8px; padding-left: 42px; border-left: 4px solid #9fb3c2; background: #d6dce8; font: 500 13px/55px "Open Sans", sans-serif; color: #4e6a91; }
.well { height: 88px; margin-top: 17px; padding: 9px 10px 0; border: 1px solid #ddd; background: #fcfcfd; }
.well h4 { display: flex; align-items: center; gap: 3px; height: 29px; padding: 0 0 7px 5px; border-bottom: 1px dashed #ddd; font: 500 14px/20px "Roboto", sans-serif; color: #333; }
.well svg { color: #4c8a54; }
.well p { padding: 8px 6px; font-size: 11px; line-height: 16px; }
.foot { flex: none; height: 21px; padding-right: 7px; border-top: 1px solid #ccc; text-align: right; font: 700 10px/28px "Liberation Sans", sans-serif; }
.cursor { position: absolute; left: 417px; top: 203px; width: 34px; height: 30px; }
.note { position: absolute; left: 551px; top: 319px; width: 690px; white-space: nowrap; background: #fff; font: 700 23px/25px "Liberation Serif", "Times New Roman", serif; font-kerning: none; color: #df2026; }
.controls { position: absolute; inset: auto 0 0 0; display: flex; flex-direction: column; justify-content: flex-end; height: 192px; padding: 0 32px 10px; background: linear-gradient(transparent, rgba(0, 0, 0, 0.18) 25%, rgba(0, 0, 0, 0.46) 48%, rgba(0, 0, 0, 0.76) 80%, rgba(0, 0, 0, 0.96)); color: #fff; }
.ctl-row { display: flex; align-items: center; gap: 32px; height: 32px; padding-left: 6px; font: 14px "Liberation Sans", Arial, sans-serif; }
.ctl-row span { margin: 0 auto 0 -14px; }
.ctl-row .mute { color: #8b8b8b; }
.seek { appearance: none; width: 100%; height: 4px; margin: 16px 0 2px; border-radius: 2px; background: linear-gradient(90deg, #fff 104px, #b9b9b9 104px 579px, #666 579px); }
.seek::-webkit-slider-thumb { appearance: none; width: 0; height: 0; }

.taskbar { display: flex; height: 40px; flex: none; background: #03192d; color: #fff; }
.task { display: flex; align-items: center; justify-content: center; width: 49px; border: 0; padding: 0; background: none; }
.sys { width: 48px; }
.run { background: linear-gradient(#9acdf5, #9acdf5) no-repeat center bottom / 41px 2px; }
.run.on { width: 48px; margin-left: 3px; background: linear-gradient(#9acdf5, #9acdf5) no-repeat center bottom / 100% 2px #3a4a59; }
.word-w { font: 700 10px "Liberation Sans", sans-serif; fill: #fff; }
.tray { display: flex; align-items: center; gap: 7px; margin-left: auto; padding-right: 4px; }
.up { margin-left: 11px; }
.clock { display: flex; flex-direction: column; align-items: center; width: 58px; font-size: 11px; line-height: 18px; }
.notif { position: relative; margin: 0 11px 0 9px; height: 18px; }
.notif b { position: absolute; left: 8px; top: 7px; width: 16px; height: 16px; border: 1px solid #888; border-radius: 50%; background: #2d3237; font: 700 10px/14px "Open Sans", sans-serif; text-align: center; }
.edge { width: 1px; height: 40px; background: #53606d; }

.mark { position: absolute; top: 0; z-index: 5; fill: none; stroke: #ed1c24; stroke-width: 8px; stroke-linejoin: round; pointer-events: none; }
.mark-left { left: 0; width: 240px; height: 600px; }
.mark-right { right: 0; width: 480px; height: 800px; }
</style>
